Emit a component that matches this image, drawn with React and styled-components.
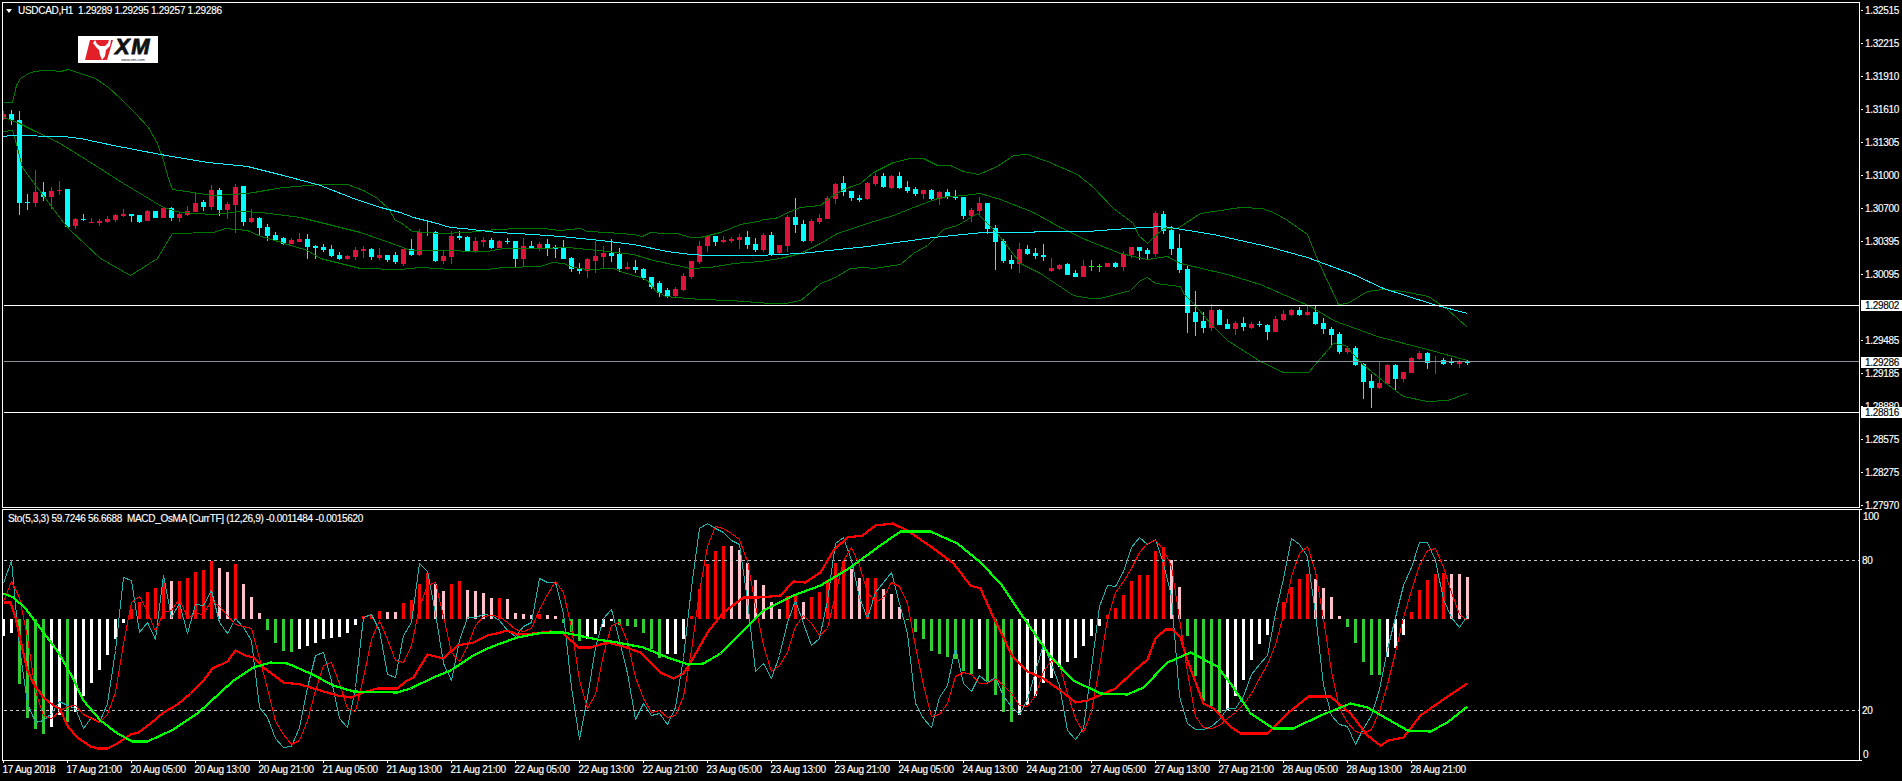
import React from "react";
import styled, { createGlobalStyle } from "styled-components";

const candles = [
  [111,114,119,120,"r"],[110,114,120,125,"c"],[111,120,203,215,"c"],[194,202,203,210,"c"],[170,192,203,207,"r"],[182,192,197,201,"c"],[187,191,197,209,"r"],[181,190,191,195,"r"],
  [189,189,227,227,"c"],[218,219,226,229,"r"],[214,219,220,221,"c"],[218,222,223,223,"r"],[219,221,223,226,"r"],[216,219,222,223,"r"],[214,215,220,222,"r"],[209,214,216,217,"r"],
  [214,214,216,222,"c"],[215,215,222,223,"c"],[210,211,221,221,"r"],[211,211,218,218,"c"],[207,208,218,218,"r"],[207,208,218,221,"c"],[212,214,218,222,"r"],[206,211,215,216,"r"],
  [193,203,212,212,"r"],[200,202,207,211,"c"],[185,190,207,210,"r"],[188,190,210,216,"c"],[202,204,210,219,"r"],[184,187,205,233,"r"],[186,186,222,226,"c"],[209,218,222,223,"r"],
  [217,218,228,235,"c"],[224,227,236,241,"c"],[232,235,240,241,"c"],[237,238,244,245,"c"],[238,240,244,244,"r"],[233,239,242,242,"r"],[234,239,247,259,"c"],[245,246,248,259,"c"],
  [244,247,250,252,"c"],[245,249,256,257,"c"],[252,255,259,260,"c"],[255,256,259,260,"r"],[247,250,257,260,"r"],[246,249,251,258,"r"],[248,249,257,260,"c"],[248,255,258,260,"r"],
  [255,255,260,262,"c"],[252,255,262,264,"c"],[249,249,264,266,"r"],[239,249,255,256,"c"],[229,232,255,256,"r"],[222,232,233,236,"l"],[231,232,261,262,"c"],[251,256,261,264,"r"],
  [231,236,257,264,"r"],[231,236,238,240,"c"],[236,237,251,252,"c"],[237,241,252,253,"r"],[237,240,242,247,"r"],[238,240,248,249,"c"],[240,241,248,248,"r"],[238,241,242,244,"c"],
  [241,241,259,268,"c"],[238,246,259,266,"r"],[241,246,249,249,"c"],[242,244,249,251,"r"],[239,244,249,256,"c"],[245,247,249,258,"c"],[240,248,259,259,"c"],[257,258,269,272,"c"],
  [263,268,271,274,"c"],[258,259,271,278,"r"],[241,256,261,273,"r"],[246,253,257,269,"r"],[239,253,256,262,"c"],[248,254,269,272,"c"],[262,267,269,270,"r"],[260,267,270,273,"c"],
  [268,269,278,280,"c"],[277,277,287,289,"c"],[281,283,293,297,"c"],[288,290,297,298,"c"],[287,289,296,298,"r"],[273,276,290,291,"r"],[261,261,277,279,"r"],[241,246,262,264,"r"],
  [236,236,246,252,"r"],[236,236,242,246,"c"],[236,240,242,243,"r"],[237,239,241,243,"r"],[234,237,240,249,"r"],[231,237,245,249,"c"],[238,244,250,252,"c"],[233,235,250,252,"r"],
  [232,235,255,256,"c"],[245,245,253,254,"r"],[215,217,246,252,"r"],[198,217,225,233,"c"],[220,224,241,242,"c"],[219,221,241,243,"r"],[214,218,222,224,"r"],[196,198,219,219,"r"],
  [183,184,199,204,"r"],[176,183,192,196,"c"],[191,191,198,201,"c"],[195,198,200,202,"c"],[182,183,199,200,"r"],[173,176,184,186,"r"],[173,176,187,188,"c"],[175,176,188,189,"r"],
  [172,176,188,189,"c"],[181,187,191,193,"c"],[187,189,194,196,"c"],[190,190,194,199,"r"],[189,190,199,200,"c"],[191,192,199,205,"r"],[189,192,197,199,"c"],[190,196,198,200,"c"],
  [197,197,216,219,"c"],[208,210,216,222,"r"],[197,203,211,215,"r"],[203,203,229,234,"c"],[225,228,242,270,"c"],[239,241,261,263,"c"],[255,260,264,269,"c"],[243,249,264,273,"r"],
  [245,249,254,255,"c"],[248,253,256,259,"c"],[244,255,257,261,"c"],[258,268,271,272,"r"],[264,265,269,270,"r"],[263,264,275,275,"c"],[270,273,277,277,"c"],[260,266,277,277,"r"],
  [260,266,267,271,"l"],[264,266,267,272,"l"],[263,263,267,267,"r"],[262,263,267,268,"c"],[251,254,267,271,"r"],[247,247,255,258,"r"],[247,247,251,260,"c"],[248,250,254,259,"c"],
  [211,213,254,257,"r"],[211,214,231,234,"c"],[226,230,249,255,"c"],[234,248,270,273,"c"],[265,269,313,333,"c"],[291,312,322,336,"c"],[312,321,328,333,"c"],[304,310,328,331,"r"],
  [309,310,325,325,"c"],[319,324,329,329,"c"],[321,323,329,335,"r"],[317,323,327,331,"c"],[322,324,328,329,"r"],[321,324,325,327,"c"],[324,325,332,340,"c"],[316,319,332,332,"r"],
  [310,314,320,321,"r"],[309,310,315,316,"r"],[307,310,315,316,"c"],[305,312,315,316,"r"],[306,312,324,325,"c"],[318,323,329,334,"c"],[327,329,335,346,"c"],[332,334,352,354,"c"],
  [346,348,352,354,"r"],[346,348,365,366,"c"],[363,364,382,399,"c"],[374,381,388,408,"c"],[361,383,388,389,"r"],[364,365,384,384,"r"],[364,365,379,390,"c"],[372,372,379,382,"r"],
  [357,358,373,373,"r"],[351,353,359,360,"r"],[352,353,363,369,"c"],[356,361,362,374,"r"],[358,360,364,365,"c"],[358,362,363,365,"c"],[360,361,364,368,"r"],[360,362,363,365,"c"],
];

const upperBand = "3,102 12,102 16,85 20,78 30,72 42,70 50,70 60,71 68,69 80,73 95,78 108,87 120,98 135,113 148,127 157,143 163,160 168,178 172,189 213,195 247,193 283,187 320,184 347,184 363,190 377,198 388,208 395,220 400,222 412,231 440,233 467,232 495,229 520,228 543,228 560,230 580,228 587,231 607,232 633,234 642,236 650,232 663,233 677,233 690,237 700,237 720,232 740,224 758,221 763,219 775,218 790,211 800,207 820,205 830,197 843,189 860,183 873,172 893,162 910,158 923,158 937,165 950,165 963,171 978,174 997,166 1013,155 1027,154 1047,161 1077,174 1093,187 1113,208 1133,223 1138,235 1147,243 1163,228 1177,228 1200,213 1240,207 1262,208 1275,213 1287,220 1307,234 1317,259 1338,304 1347,303 1367,291 1383,289 1403,291 1428,296 1447,309 1467,327";
const middleBand = "3,117 17,122 33,130 58,142 87,160 123,183 163,207 180,212 213,214 240,211 260,212 300,217 360,232 400,246 410,250 433,250 487,251 503,248 540,248 567,247 587,249 607,251 633,254 653,260 677,265 690,268 710,267 733,263 760,261 780,258 800,253 820,243 837,233 867,223 893,215 913,207 940,197 963,195 980,193 1000,199 1033,212 1060,227 1087,240 1120,253 1147,259 1167,256 1180,263 1227,274 1260,284 1310,306 1333,320 1377,336 1427,349 1467,360";
const lowerBand = "3,131 12,130 15,140 22,167 33,182 63,222 70,230 100,258 130,275 157,258 172,233 213,232 225,228 247,230 258,235 307,250 320,258 360,268 400,269 420,267 437,268 450,269 487,269 503,267 540,266 552,262 563,263 573,267 587,269 613,268 623,272 640,277 647,280 655,290 665,296 700,299 730,300 770,303 785,303 800,300 810,292 820,283 833,278 850,268 863,267 873,268 900,264 913,253 927,245 943,229 957,225 977,213 997,233 1020,263 1040,273 1073,295 1090,298 1100,298 1130,290 1140,280 1147,277 1155,283 1180,286 1183,293 1192,302 1210,323 1227,340 1260,361 1283,372 1308,372 1333,343 1345,345 1360,362 1383,381 1403,396 1427,401 1447,400 1467,393";
const movingAvg = "3,136 10,135 63,136 80,138 113,145 160,154 207,162 247,166 283,175 320,185 353,198 380,207 400,212 413,217 433,222 450,227 463,228 497,232 533,234 560,236 600,240 633,244 667,251 690,254 707,255 757,255 800,253 867,246 933,237 983,232 1087,231 1127,228 1163,226 1213,234 1267,246 1307,257 1353,274 1383,288 1433,304 1467,313";

const histogram = "w636 w633 g684 g718 g729 g734 w727 w715 g722 w712 w696 w683 w670 w655 w639 w623 r609 r602 r592 r588 r580 p581 r581 r578 r572 r570 r561 p568 p572 r564 p584 p597 p613 g630 g643 g651 g652 w649 w646 w643 w639 w638 w637 w633 w625 r616 r615 r611 p612 p612 r603 r600 r584 r573 p584 p591 r584 r581 p590 p591 p593 p598 r598 p599 p613 p614 p615 r614 p615 p616 g623 g632 g641 w639 w634 w627 w621 g625 g626 g627 g633 g649 g658 w654 w654 w639 r616 r589 r564 r551 r546 p546 p550 p563 p580 p585 p602 p609 r596 r594 p602 r597 r592 r580 r563 r561 p569 p578 r578 r578 p589 p594 p607 g620 g632 g639 g651 g654 g657 g659 g671 g674 w669 g681 g695 g712 g722 w715 w705 w696 w683 w678 w667 w662 w658 w646 w636 w626 r615 r608 r595 r581 r575 r575 r551 r547 p560 p587 g636 g676 g701 g706 g713 w710 w696 w680 w660 w644 w635 r618 r602 r587 r579 r574 p579 p588 p597 p616 g627 g643 g662 g675 g675 w657 w648 w635 r612 r590 r580 r574 r573 p574 p574 p577".split(" ");

const stochMain = [
  583,560,647,703,722,720,713,701,705,708,
  728,717,722,703,650,577,580,632,622,639,
  575,617,603,633,604,605,590,622,633,618,
  627,640,707,717,738,747,746,727,687,655,
  652,680,718,727,687,617,614,630,674,677,
  635,622,563,571,613,663,680,640,617,617,
  614,615,620,630,636,626,622,578,582,582,
  613,687,739,697,647,618,609,640,673,719,
  703,715,713,724,707,657,587,528,523,528,
  532,540,544,600,671,663,678,655,622,600,
  623,645,638,600,543,537,560,597,618,592,
  582,572,603,633,703,718,727,697,685,647,
  683,691,675,682,677,696,706,714,699,671,
  644,664,685,730,739,728,667,606,585,586,
  571,547,537,544,539,563,596,696,723,729,
  729,726,719,708,708,696,674,664,655,613,
  578,538,544,556,613,685,715,724,726,744,
  728,715,689,649,617,585,567,542,542,560,
  599,617,627,615,
];

const macdMain = "3,602 10,602 15,617 20,640 27,670 33,683 43,697 53,705 59,708 68,727 77,737 90,746 97,748 107,748 117,743 130,734 138,732 150,723 163,712 177,704 190,693 203,680 212,668 227,661 235,650 245,655 253,657 263,667 283,682 300,684 320,690 337,695 350,697 363,692 377,688 397,688 405,681 413,677 427,654 443,658 457,645 473,642 487,635 500,632 507,630 517,634 533,633 550,631 563,633 578,647 590,647 607,642 623,646 640,652 660,672 673,678 683,673 693,657 707,632 723,612 743,597 757,597 770,596 780,595 793,581 805,582 820,572 833,550 847,537 862,535 875,525 892,523 907,530 933,548 953,563 970,585 980,588 993,617 1000,631 1012,656 1027,671 1043,678 1060,690 1075,702 1087,700 1115,688 1133,671 1147,659 1155,638 1165,629 1172,629 1180,637 1187,660 1203,703 1213,708 1230,726 1240,733 1267,733 1287,713 1308,696 1330,696 1350,713 1367,735 1380,745 1388,740 1403,737 1420,715 1440,701 1467,683";
const macdSignal = "3,593 13,597 25,608 43,632 58,652 72,677 83,700 100,720 117,733 132,741 147,741 173,729 197,713 220,692 233,680 253,667 270,662 287,663 310,673 333,685 353,691 397,692 410,688 433,677 450,670 473,655 487,648 500,643 517,637 537,633 550,632 563,632 597,639 617,642 643,647 667,657 688,664 703,663 720,653 740,633 763,610 793,595 820,585 850,567 877,547 900,531 930,531 957,543 980,562 1000,583 1023,617 1050,656 1073,680 1100,693 1127,694 1143,687 1167,662 1190,652 1217,666 1233,687 1250,713 1273,728 1293,728 1320,715 1350,703 1367,707 1407,730 1430,731 1447,722 1467,706";

const priceTicks = ["1.32515","1.32215","1.31910","1.31610","1.31305","1.31000","1.30700","1.30395","1.30095","1.29790","1.29485","1.29185","1.28880","1.28575","1.28275","1.27970"];
const priceTags = [{ label: "1.29802", top: 298 }, { label: "1.29286", top: 355 }, { label: "1.28816", top: 405 }];
const timeLabels = ["17 Aug 2018","17 Aug 21:00","20 Aug 05:00","20 Aug 13:00","20 Aug 21:00","21 Aug 05:00","21 Aug 13:00","21 Aug 21:00","22 Aug 05:00","22 Aug 13:00","22 Aug 21:00","23 Aug 05:00","23 Aug 13:00","23 Aug 21:00","24 Aug 05:00","24 Aug 13:00","24 Aug 21:00","27 Aug 05:00","27 Aug 13:00","27 Aug 21:00","28 Aug 05:00","28 Aug 13:00","28 Aug 21:00"];

const candleColor = { c: "#00ffff", r: "#dc143c", l: "#00ff00" };
const barColor = { w: "#ffffff", g: "#32cd32", r: "#ff0000", p: "#ffc0cb" };
const BASELINE = 619;
const barX = (i) => 3 + i * 8;

const stochSignal = stochMain.map((y, i) => {
  const a = i > 0 ? stochMain[i - 1] : 600;
  const b = i > 1 ? stochMain[i - 2] : i === 1 ? 600 : 620;
  return Math.round((y + a + b) / 3);
});
const byIndex = (ys) => ys.map((y, i) => `${barX(i)},${y}`).join(" ");

const GlobalStyle = createGlobalStyle`
  html, body {
    margin: 0;
    background: #000;
    overflow: hidden;
  }
`;

const Terminal = styled.div`
  width: 1902px;
  height: 781px;
  box-sizing: border-box;
  padding: 2px 0 0 2px;
  background: #000;
  color: #fff;
  font-family: "Liberation Sans", Arial, sans-serif;
  font-size: 10px;
  line-height: 11px;
  letter-spacing: -0.3px;
  -webkit-text-stroke: 0.15px currentColor;
  overflow: hidden;
`;

const Row = styled.div`
  display: flex;
  align-items: flex-start;
  height: ${(p) => p.$height}px;
  margin-bottom: ${(p) => p.$gap || 0}px;
`;

const Pane = styled.div`
  position: relative;
  flex: none;
  box-sizing: border-box;
  width: 1858px;
  height: 100%;
  border: 1px solid #fff;
  overflow: hidden;
`;

const Chart = styled.svg`
  display: block;
  width: 1856px;
  height: 100%;
`;

const Legend = styled.div`
  position: absolute;
  top: ${(p) => p.$top}px;
  left: ${(p) => p.$left}px;
  display: flex;
  align-items: center;
  gap: 6px;
  white-space: pre;
`;

const DropArrow = styled.i`
  width: 0;
  height: 0;
  border-left: 3.5px solid transparent;
  border-right: 3.5px solid transparent;
  border-top: 4px solid #fff;
`;

const Logo = styled.div`
  position: absolute;
  top: 33px;
  left: 75px;
  display: flex;
  align-items: flex-start;
  width: 80px;
  height: 27px;
  background: #fff;
  color: #111;
`;

const LogoMark = styled.svg`
  flex: none;
  width: 37px;
  height: 27px;
`;

const LogoWords = styled.div`
  display: flex;
  flex-direction: column;
  align-items: center;
`;

const LogoName = styled.span`
  font-size: 22px;
  font-style: italic;
  font-weight: 700;
  line-height: 22px;
  letter-spacing: 1.5px;
  -webkit-text-stroke: 0.8px #111;
`;

const LogoUrl = styled.span`
  font-size: 4px;
  line-height: 4px;
  letter-spacing: 0;
  -webkit-text-stroke: 0;
`;

const PriceAxis = styled.div`
  position: relative;
  flex: none;
  display: flex;
  flex-direction: column;
  width: 42px;
  padding-top: 3px;
`;

const PriceTick = styled.div`
  position: relative;
  flex: none;
  height: 33px;
  padding-left: 5px;

  &::before {
    content: "";
    position: absolute;
    top: 5px;
    left: 1px;
    width: 2px;
    height: 1px;
    background: #fff;
  }
`;

const PriceTag = styled.div`
  position: absolute;
  top: ${(p) => p.$top}px;
  left: 1px;
  width: 41px;
  box-sizing: border-box;
  padding-left: 4px;
  background: #fff;
  color: #000;
`;

const ScaleAxis = styled.div`
  position: relative;
  flex: none;
  display: flex;
  flex-direction: column;
  width: 42px;
  height: 100%;
  padding-top: 2px;
  box-sizing: border-box;

  &::before, &::after {
    content: "";
    position: absolute;
    left: 0;
    width: 2px;
    height: 1px;
    background: #fff;
  }
  &::before { top: 0; }
  &::after { bottom: 0; }
`;

const ScaleLabel = styled.div`
  flex: none;
  height: ${(p) => p.$step}px;
  padding-left: ${(p) => p.$indent}px;
`;

const TimeAxis = styled.div`
  display: flex;
  padding-left: 1px;
`;

const TimeCell = styled.div`
  position: relative;
  flex: none;
  width: 64px;
  padding-top: 3px;
  text-indent: -0.5px;
  white-space: nowrap;

  &::before {
    content: "";
    position: absolute;
    top: 0;
    left: 0;
    width: 1px;
    height: 2px;
    background: #fff;
  }
`;

function Candle({ data, index }) {
  const [high, top, bottom, low, kind] = data;
  const x = barX(index);
  const fill = candleColor[kind];
  return (
    <g fill={fill}>
      <rect x={x} y={high} width="1" height={low - high} />
      <rect x={x - 2} y={top} width="5" height={Math.max(bottom - top, 1)} />
    </g>
  );
}

function Bar({ code, index }) {
  const y = Number(code.slice(1));
  const up = y < BASELINE;
  return (
    <rect
      x={barX(index) - 1}
      y={up ? y : BASELINE}
      width="3"
      height={Math.abs(y - BASELINE)}
      fill={barColor[code[0]]}
    />
  );
}

function Line({ points, color, width = 1, dash }) {
  return (
    <polyline
      points={points}
      fill="none"
      stroke={color}
      strokeWidth={width}
      strokeDasharray={dash}
      strokeLinejoin="round"
    />
  );
}

function PriceChart() {
  return (
    <Chart viewBox="3 3 1856 504" shapeRendering="crispEdges">
      {candles.map((c, i) => (
        <Candle key={i} data={c} index={i} />
      ))}
      <g transform="translate(.5 .5)">
        <Line points={upperBand} color="#007800" />
        <Line points={middleBand} color="#007800" />
        <Line points={lowerBand} color="#007800" />
        <Line points={movingAvg} color="#19f0ff" />
        <Line points="3,305 1859,305" color="#ffffff" />
        <Line points="3,361 1859,361" color="#8a929c" />
        <Line points="3,412 1859,412" color="#ffffff" />
      </g>
    </Chart>
  );
}

function OscillatorChart() {
  return (
    <Chart viewBox="3 510 1856 250" shapeRendering="crispEdges">
      {histogram.map((code, i) => (
        <Bar key={i} code={code} index={i} />
      ))}
      <g transform="translate(.5 .5)">
        <Line points="3,560 1859,560" color="#c8c8c8" dash="3 3" />
        <Line points="3,710 1859,710" color="#c8c8c8" dash="3 3" />
        <Line points={byIndex(stochMain)} color="#20b2aa" />
        <Line points={byIndex(stochSignal)} color="#ff0000" />
        <Line points={macdMain} color="#ff0000" width={2.2} />
        <Line points={macdSignal} color="#00ff00" width={2.2} />
      </g>
    </Chart>
  );
}

function XmLogo() {
  return (
    <Logo>
      <LogoMark viewBox="0 0 37 27">
        <polygon points="12,4 35,4 29,24 7,24" fill="#e3202a" />
        <polygon points="17,4 19,8 22,10 27,10 30,7 31,4 33,4 32,10 28,14 27,20 24,24 22,19 21,14 18,11 15,7" fill="#fff" />
      </LogoMark>
      <LogoWords>
        <LogoName>XM</LogoName>
        <LogoUrl>www.xm.com</LogoUrl>
      </LogoWords>
    </Logo>
  );
}

export default function App() {
  return (
    <Terminal>
      <GlobalStyle />
      <Row $height={506} $gap={1}>
        <Pane>
          <PriceChart />
          <Legend $top={2} $left={3}>
            <DropArrow />
            {"USDCAD,H1  1.29289 1.29295 1.29257 1.29286"}
          </Legend>
          <XmLogo />
        </Pane>
        <PriceAxis>
          {priceTicks.map((t) => (
            <PriceTick key={t}>{t}</PriceTick>
          ))}
          {priceTags.map((t) => (
            <PriceTag key={t.label} $top={t.top}>{t.label}</PriceTag>
          ))}
        </PriceAxis>
      </Row>
      <Row $height={252}>
        <Pane>
          <OscillatorChart />
          <Legend $top={3} $left={5}>
            {"Sto(5,3,3) 59.7246 56.6688  MACD_OsMA [CurrTF] (12,26,9) -0.0011484 -0.0015620"}
          </Legend>
        </Pane>
        <ScaleAxis>
          <ScaleLabel $step={44} $indent={3}>100</ScaleLabel>
          <ScaleLabel $step={150} $indent={2}>80</ScaleLabel>
          <ScaleLabel $step={44} $indent={2}>20</ScaleLabel>
          <ScaleLabel $step={11} $indent={3}>0</ScaleLabel>
        </ScaleAxis>
      </Row>
      <TimeAxis>
        {timeLabels.map((t) => (
          <TimeCell key={t}>{t}</TimeCell>
        ))}
      </TimeAxis>
    </Terminal>
  );
}
